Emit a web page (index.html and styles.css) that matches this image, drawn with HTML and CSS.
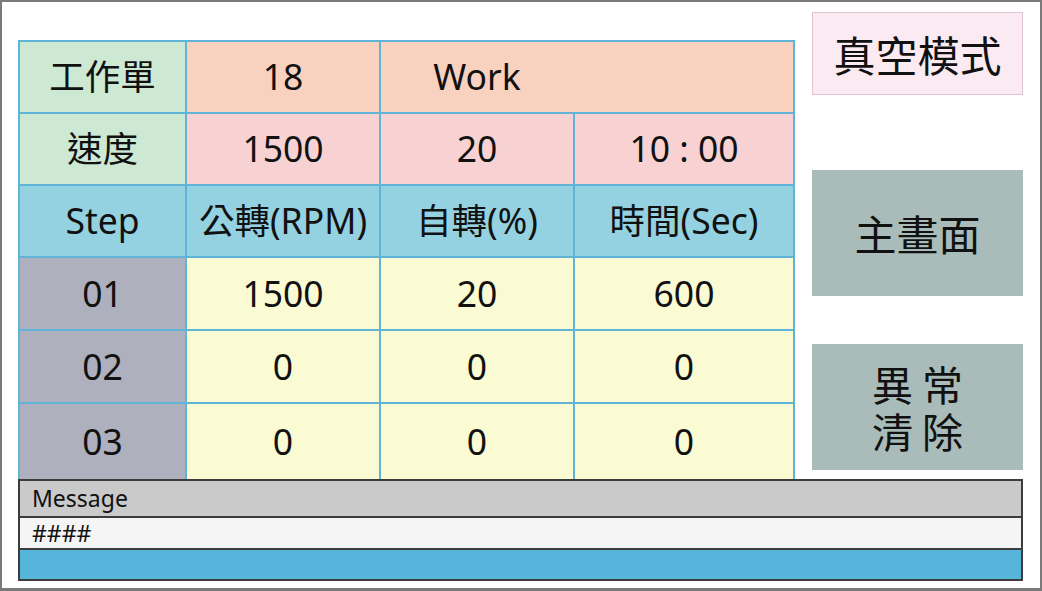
FILE: index.html
```html
<!DOCTYPE html>
<html lang="zh-Hant">
<head>
<meta charset="utf-8">
<title>真空模式</title>
<link rel="stylesheet" href="styles.css">
</head>
<body>
<div class="frame">
  <div class="table">
    <div class="cell label">工作單</div>
    <div class="cell peach">18</div>
    <div class="cell peach span2"><span class="work">Work</span></div>

    <div class="cell label">速度</div>
    <div class="cell pink">1500</div>
    <div class="cell pink">20</div>
    <div class="cell pink">10 : 00</div>

    <div class="cell head">Step</div>
    <div class="cell head">公轉(RPM)</div>
    <div class="cell head">自轉(%)</div>
    <div class="cell head">時間(Sec)</div>

    <div class="cell step">01</div>
    <div class="cell data">1500</div>
    <div class="cell data">20</div>
    <div class="cell data">600</div>

    <div class="cell step">02</div>
    <div class="cell data">0</div>
    <div class="cell data">0</div>
    <div class="cell data">0</div>

    <div class="cell step">03</div>
    <div class="cell data">0</div>
    <div class="cell data">0</div>
    <div class="cell data">0</div>
  </div>

  <div class="side">
    <div class="btn btn-vacuum">真空模式</div>
    <div class="btn btn-gray btn-home">主畫面</div>
    <div class="btn btn-gray btn-clear">
      <div class="line">異 常</div>
      <div class="line">清 除</div>
    </div>
  </div>

  <div class="message">
    <div class="msg-title">Message</div>
    <div class="msg-body">####</div>
    <div class="msg-bar"></div>
  </div>
</div>
</body>
</html>
```

FILE: styles.css
```css
html, body {
  margin: 0;
  padding: 0;
  background: #ffffff;
}

body {
  font-family: "Noto Sans", "Noto Sans CJK TC", sans-serif;
  color: #111111;
}

.frame {
  box-sizing: border-box;
  width: 1042px;
  height: 591px;
  border: 2px solid #7a7a7a;
  border-bottom-width: 3px;
  padding: 10px 17px 0 16px;
  display: grid;
  grid-template-columns: 777px 211px;
  grid-template-rows: 467px 102px;
  column-gap: 17px;
}

/* ---------- table ---------- */
.table {
  align-self: end;
  height: 439px;
  box-sizing: border-box;
  background: #5fb4d8;
  padding: 2px 2px 0 2px;
  display: grid;
  grid-template-columns: 165px 192px 192px 218px;
  grid-template-rows: 70px 70px 70px 71px 71px 75px;
  gap: 2px;
}

.cell {
  display: flex;
  align-items: center;
  justify-content: center;
  font-size: 35.5px;
  line-height: 1;
  white-space: nowrap;
}

.span2 {
  grid-column: span 2;
  justify-content: flex-start;
}

.work {
  width: 192px;
  text-align: center;
}

.label { background: #cde8d3; }
.peach { background: #f8d1bf; }
.pink  { background: #f8d2d3; }
.head  { background: #94d2e1; }
.step  { background: #aeb0bd; }
.data  { background: #fafad3; }

/* ---------- side buttons ---------- */
.side {
  display: flex;
  flex-direction: column;
}

.btn {
  box-sizing: border-box;
  display: flex;
  align-items: center;
  justify-content: center;
  text-align: center;
  font-family: "Noto Sans CJK TC", "Noto Sans", sans-serif;
  font-size: 42px;
  line-height: 1;
  color: #111111;
}

.btn-vacuum {
  height: 83px;
  background: #fbeaf2;
  border: 1px solid #e2c3d3;
}

.btn-gray {
  height: 126px;
  background: #a9bcba;
}

.btn-home {
  margin-top: 75px;
}

.btn-clear {
  margin-top: 48px;
  flex-direction: column;
  font-size: 41px;
  white-space: pre;
}

.btn-clear .line {
  height: 47px;
  line-height: 47px;
}

/* ---------- message ---------- */
.message {
  grid-column: 1 / span 2;
  box-sizing: border-box;
  height: 102px;
  border: 2px solid #3c3c3c;
  display: flex;
  flex-direction: column;
}

.msg-title {
  height: 35px;
  background: #cacaca;
  border-bottom: 2px solid #3c3c3c;
  font-size: 23px;
  line-height: 35px;
  padding-left: 12px;
}

.msg-body {
  height: 30px;
  background: #f5f5f5;
  border-bottom: 2px solid #3c3c3c;
  font-size: 23px;
  line-height: 30px;
  padding-left: 12px;
}

.msg-bar {
  flex: 1;
  background: #56b5db;
}
```
